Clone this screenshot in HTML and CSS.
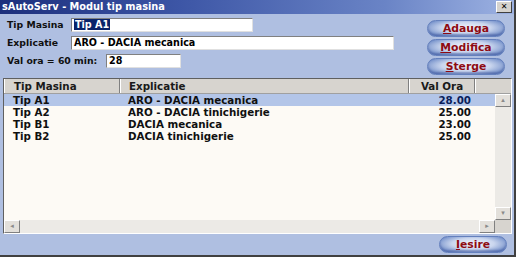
FILE: index.html
```html
<!DOCTYPE html>
<html lang="ro">
<head>
    <meta charset="UTF-8">
    <title>sAutoServ - Modul tip masina</title>
    <link rel="stylesheet" href="styles.css">
</head>
<body>
    <div class="window">
        <div class="titlebar">
            <span class="title">sAutoServ - Modul tip masina</span>
            <span class="close">&#x2715;</span>
        </div>
        <div class="top">
            <div class="form">
                <div class="row">
                    <label class="lbl">Tip Masina</label>
                    <div class="field f-tip"><span class="sel">Tip A1</span></div>
                </div>
                <div class="row">
                    <label class="lbl">Explicatie</label>
                    <div class="field f-expl">ARO - DACIA mecanica</div>
                </div>
                <div class="row">
                    <label class="lbl">Val ora = 60 min:</label>
                    <div class="field f-val">28</div>
                </div>
            </div>
            <div class="actions">
                <button class="pill"><u>A</u>dauga</button>
                <button class="pill"><u>M</u>odifica</button>
                <button class="pill"><u>S</u>terge</button>
            </div>
        </div>
        <div class="grid">
            <div class="head">
                <div class="c c1">Tip Masina</div>
                <div class="c c2">Explicatie</div>
                <div class="c c3">Val Ora</div>
                <div class="c c4"></div>
            </div>
            <div class="middle">
                <div class="rows">
                    <div class="r active"><div class="c1">Tip A1</div><div class="c2">ARO - DACIA mecanica</div><div class="c3">28.00</div></div>
                    <div class="r"><div class="c1">Tip A2</div><div class="c2">ARO - DACIA tinichigerie</div><div class="c3">25.00</div></div>
                    <div class="r"><div class="c1">Tip B1</div><div class="c2">DACIA mecanica</div><div class="c3">23.00</div></div>
                    <div class="r"><div class="c1">Tip B2</div><div class="c2">DACIA tinichigerie</div><div class="c3">25.00</div></div>
                </div>
                <div class="vscroll">
                    <span class="arrow">&#9652;</span>
                    <span class="arrow">&#9662;</span>
                </div>
            </div>
            <div class="hscroll">
                <span class="arrow">&#9666;</span>
                <span class="arrow">&#9656;</span>
                <span class="corner"></span>
            </div>
        </div>
        <div class="footer">
            <button class="pill exit"><u>I</u>esire</button>
        </div>
    </div>
</body>
</html>
```

FILE: styles.css
```css
body {
    margin: 0;
    font-family: 'DejaVu Sans', Verdana, sans-serif;
    font-size: 10px;
    font-weight: bold;
}
.window {
    width: 516px;
    height: 257px;
    box-sizing: border-box;
    display: flex;
    flex-direction: column;
    background: #afbfe1;
    border-right: 2px solid #404040;
    border-bottom: 2px solid #404040;
}
.titlebar {
    height: 14px;
    display: flex;
    align-items: center;
    justify-content: space-between;
    padding: 0 2px 0 2px;
    background: linear-gradient(90deg, #1c2f7c, #3d56a6 35%, #6a84c6 75%, #9db2e2);
    color: white;
}
.title {
    font-size: 9.8px;
    line-height: 14px;
}
.close {
    width: 14px;
    height: 10px;
    background: #d6d3ce;
    color: #000;
    font-size: 8px;
    line-height: 10px;
    text-align: center;
    border: 1px solid;
    border-color: #fff #404040 #404040 #fff;
}
.top {
    display: flex;
    justify-content: space-between;
    height: 64px;
}
.form {
    display: flex;
    flex-direction: column;
    gap: 3px;
    padding: 3px 0 0 7px;
}
.row {
    display: flex;
    align-items: center;
    height: 15px;
}
.lbl {
    width: 64px;
    font-size: 9.3px;
    color: #101010;
}
.row:last-child .lbl {
    width: 99px;
}
.field {
    height: 14px;
    box-sizing: border-box;
    background: #fff;
    border: 1px solid;
    border-color: #808080 #e0e0e0 #e0e0e0 #808080;
    padding: 0 2px;
    font-size: 9.6px;
    line-height: 12px;
    color: #000;
}
.f-tip {
    width: 182px;
}
.f-expl {
    width: 323px;
}
.f-val {
    width: 75px;
}
.sel {
    background: #0a246a;
    color: #fff;
    padding: 0 1px;
}
.actions {
    display: flex;
    flex-direction: column;
    gap: 2px;
    padding: 6px 9px 0 0;
}
.pill {
    width: 78px;
    height: 17px;
    padding: 0;
    border: 1px solid #6480bd;
    border-radius: 9px;
    background: radial-gradient(ellipse 58% 68% at 50% 45%, #f2f5fc 0%, #cad6ee 55%, #6f8cc8 100%);
    box-shadow: inset 0 -2px 2px rgba(50, 70, 140, 0.4);
    color: #8e0b12;
    font-family: 'DejaVu Sans', Verdana, sans-serif;
    font-size: 10.8px;
    font-weight: bold;
    line-height: 14px;
}
.grid {
    margin: 0 2px 0 3px;
    height: 154px;
    display: flex;
    flex-direction: column;
    background: #fdfaf5;
    border: 1px solid;
    border-color: #606060 #fff #fff #606060;
    font-size: 10.3px;
}
.head {
    display: flex;
    height: 14px;
    background: #d7d4cf;
    border-bottom: 1px solid #a0a0a0;
}
.head .c {
    box-sizing: border-box;
    border-right: 1px solid #808080;
    border-left: 1px solid #fff;
    line-height: 14px;
    color: #1a1a1a;
}
.c1 {
    width: 116px;
    padding-left: 9px;
    box-sizing: border-box;
}
.c2 {
    width: 289px;
    padding-left: 8px;
    box-sizing: border-box;
}
.c3 {
    width: 66px;
    padding-right: 4px;
    text-align: right;
    box-sizing: border-box;
}
.head .c3 {
    text-align: center;
    padding: 0;
}
.head .c4 {
    flex: 1;
    border-right: none;
}
.middle {
    flex: 1;
    display: flex;
}
.rows {
    flex: 1;
}
.r {
    display: flex;
    height: 12px;
    line-height: 12px;
    color: #101010;
}
.r.active {
    background: #b3c5e8;
}
.r.active .c3 {
    color: #0a1e5a;
}
.vscroll {
    width: 16px;
    display: flex;
    flex-direction: column;
    justify-content: space-between;
    background: #eceae6;
}
.arrow {
    width: 14px;
    height: 11px;
    background: #e3e0db;
    border: 1px solid;
    border-color: #fff #808080 #808080 #fff;
    color: #8a8a8a;
    font-size: 7px;
    line-height: 11px;
    text-align: center;
}
.hscroll {
    height: 13px;
    display: flex;
    background: #eceae6;
}
.hscroll .arrow:nth-child(2) {
    margin-left: auto;
}
.corner {
    width: 16px;
    background: #d7d4cf;
}
.footer {
    flex: 1;
    display: flex;
    justify-content: flex-end;
    align-items: center;
    padding-right: 7px;
}
.exit {
    width: 68px;
}
```
